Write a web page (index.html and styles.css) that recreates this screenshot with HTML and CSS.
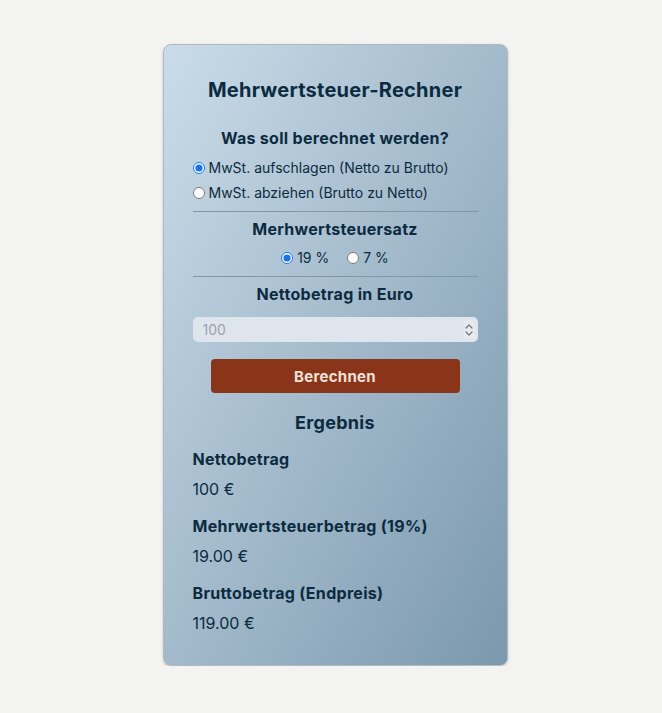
FILE: index.html
```html
<!DOCTYPE html>
<html lang="de">
<head>
<meta charset="utf-8">
<title>Mehrwertsteuer-Rechner</title>
<link rel="stylesheet" href="styles.css">
</head>
<body>
<main class="card">
  <h1 class="title">Mehrwertsteuer-Rechner</h1>
  <h2 class="section-title">Was soll berechnet werden?</h2>
  <div class="radio-list">
    <label class="radio"><input type="radio" name="mode" checked> MwSt. aufschlagen (Netto zu Brutto)</label>
    <label class="radio"><input type="radio" name="mode"> MwSt. abziehen (Brutto zu Netto)</label>
  </div>
  <hr class="divider">
  <h2 class="section-title">Merhwertsteuersatz</h2>
  <div class="radio-inline">
    <label class="radio"><input type="radio" name="rate" checked> 19 %</label>
    <label class="radio"><input type="radio" name="rate"> 7 %</label>
  </div>
  <hr class="divider">
  <h2 class="section-title">Nettobetrag in Euro</h2>
  <div class="amount-wrap">
    <input class="amount" type="text" inputmode="decimal" placeholder="100">
    <span class="spinner" aria-hidden="true">
      <svg width="8" height="14" viewBox="0 0 8 14"><path d="M1 5 L4 2 L7 5 M1 9 L4 12 L7 9" fill="none" stroke="#6f7780" stroke-width="1.2" stroke-linecap="round" stroke-linejoin="round"/></svg>
    </span>
  </div>
  <button class="calc" type="button">Berechnen</button>
  <h2 class="result-title">Ergebnis</h2>
  <div class="result">
    <h3 class="result-label">Nettobetrag</h3>
    <p class="result-value">100 €</p>
    <h3 class="result-label">Mehrwertsteuerbetrag (19%)</h3>
    <p class="result-value">19.00 €</p>
    <h3 class="result-label">Bruttobetrag (Endpreis)</h3>
    <p class="result-value">119.00 €</p>
  </div>
</main>
</body>
</html>
```
FILE: styles.css
```css
html, body {
  margin: 0;
  padding: 0;
}
body {
  background: #f3f3f2;
  font-family: Inter, "Noto Sans", sans-serif;
  color: #0c2b40;
  display: flex;
  justify-content: center;
  padding-top: 44px;
  padding-left: 8px;
}
.card {
  box-sizing: border-box;
  width: 345px;
  height: 622px;
  border: 1px solid #b3b8bd;
  border-radius: 8px;
  background: linear-gradient(to bottom right, #cadce9 0%, #7b98ad 100%);
  box-shadow: 0 1px 3px rgba(0,0,0,0.18);
  padding: 32px 29px 0;
  display: flex;
  flex-direction: column;
}
.title {
  margin: 0 0 24px;
  font-size: 20px;
  line-height: 26px;
  font-weight: 700;
  letter-spacing: 0.25px;
  text-align: center;
}
.section-title {
  margin: 0;
  font-size: 16px;
  line-height: 22px;
  font-weight: 700;
  letter-spacing: 0.3px;
  text-align: center;
}
.radio-list {
  display: flex;
  flex-direction: column;
  gap: 7px;
  margin-top: 10px;
}
.radio {
  font-size: 14px;
  line-height: 18px;
  display: flex;
  align-items: center;
  gap: 4px;
}
.radio input {
  margin: 0;
  width: 12px;
  height: 12px;
  accent-color: #1a73e8;
}
.radio-inline {
  display: flex;
  justify-content: center;
  gap: 18px;
  margin-top: 9px;
}
.divider {
  width: 100%;
  margin: 9px 0 6px;
  border: 0;
  border-top: 1px solid #8196a8;
}
.amount-wrap {
  position: relative;
  margin-top: 12px;
}
.amount {
  display: block;
  box-sizing: border-box;
  width: 100%;
  height: 25px;
  border: 0;
  border-radius: 5px;
  background: #dfe5ed;
  font-family: inherit;
  font-size: 14px;
  padding: 0 10px;
  color: #0c2b40;
  outline: none;
}
.amount::placeholder {
  color: #9aa3ad;
}
.spinner {
  position: absolute;
  right: 3px;
  top: 3px;
  width: 11px;
  height: 19px;
  border-radius: 2px;
  background: #e6e9ef;
  display: flex;
  align-items: center;
  justify-content: center;
}
.calc {
  margin: 17px auto 0;
  width: 249px;
  height: 34px;
  border: 0;
  border-radius: 4px;
  background: #8a3519;
  color: #efe2da;
  font-family: inherit;
  font-size: 15px;
  font-weight: 700;
  letter-spacing: 0.3px;
}
.result-title {
  margin: 18px 0 0;
  font-size: 18px;
  line-height: 24px;
  font-weight: 700;
  letter-spacing: 0.3px;
  text-align: center;
}
.result {
  margin-top: 13px;
}
.result-label {
  margin: 0;
  font-size: 16px;
  line-height: 22px;
  font-weight: 700;
  letter-spacing: 0.3px;
}
.result-value {
  margin: 8px 0 15px;
  font-size: 16px;
  line-height: 22px;
}
```
